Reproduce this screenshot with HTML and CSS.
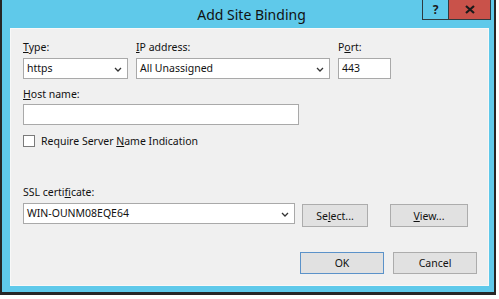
FILE: index.html
```html
<!DOCTYPE html>
<html lang="en">
<head>
  <meta charset="UTF-8" />
  <title>Add Site Binding</title>
  <link rel="stylesheet" href="styles.css">
</head>
<body>
  <div class="window">
    <div class="titlebar">
      <span class="title">Add Site Binding</span>
      <div class="caption-btns">
        <span class="cap help">?</span>
        <span class="cap close">
          <svg width="10" height="9" viewBox="0 0 10 9"><path d="M1 1 L9 8 M9 1 L1 8" stroke="#1a1a1a" stroke-width="2.2" fill="none"/></svg>
        </span>
      </div>
    </div>

    <div class="client">
      <div class="row-top">
        <div class="field">
          <label><u>T</u>ype:</label>
          <div class="select">https
            <svg class="chev" width="8" height="5" viewBox="0 0 8 5"><path d="M1 1 L4 4 L7 1" stroke="#333" stroke-width="1.3" fill="none"/></svg>
          </div>
        </div>
        <div class="field">
          <label><u>I</u>P address:</label>
          <div class="select">All Unassigned
            <svg class="chev" width="8" height="5" viewBox="0 0 8 5"><path d="M1 1 L4 4 L7 1" stroke="#333" stroke-width="1.3" fill="none"/></svg>
          </div>
        </div>
        <div class="field">
          <label>P<u>o</u>rt:</label>
          <div class="input">443</div>
        </div>
      </div>

      <div class="field host">
        <label><u>H</u>ost name:</label>
        <div class="input host-input"></div>
      </div>

      <label class="check"><span class="box"></span><span>Require Server <u>N</u>ame Indication</span></label>

      <div class="field ssl">
        <label>SSL certi<u>f</u>icate:</label>
        <div class="ssl-row">
          <div class="select ssl-select">WIN-OUNM08EQE64
            <svg class="chev" width="8" height="5" viewBox="0 0 8 5"><path d="M1 1 L4 4 L7 1" stroke="#333" stroke-width="1.3" fill="none"/></svg>
          </div>
          <button class="btn btn-select">Se<u>l</u>ect...</button>
          <button class="btn btn-view"><u>V</u>iew...</button>
        </div>
      </div>

      <div class="actions">
        <button class="btn ok">OK</button>
        <button class="btn cancel">Cancel</button>
      </div>
    </div>
  </div>
</body>
</html>
```

FILE: styles.css
```css
body {
  margin: 0;
  background: #ffffff;
  font-family: 'Noto Sans', sans-serif;
  font-size: 10.5px;
  color: #111;
}

.window {
  box-sizing: border-box;
  width: 496px;
  height: 295px;
  background: #5fc9ea;
  border: 2px solid #262626;
  border-top: 0;
  border-bottom-width: 3px;
  padding: 0 5px 6px 8px;
  position: relative;
  display: flex;
  flex-direction: column;
}

.titlebar {
  height: 28px;
  display: flex;
  align-items: center;
  justify-content: center;
}

.title {
  font-size: 14px;
  color: #111;
  margin-left: 4px;
  margin-top: 1px;
}

.caption-btns {
  position: absolute;
  top: 0;
  right: 3px;
  display: flex;
  border: 1px solid #2e3b40;
  border-top: 0;
}

.cap {
  height: 19px;
  display: flex;
  align-items: center;
  justify-content: center;
}

.help {
  width: 25px;
  background: #5fc9ea;
  font-weight: bold;
  font-size: 12px;
  color: #1a1a1a;
  border-right: 1px solid #2e3b40;
}

.close {
  width: 41px;
  background: #c9524a;
}

.client {
  flex: 1;
  background: #f0f0f0;
  border: 1px solid #f8f8f8;
  padding: 11px 11px 11px 12px;
  display: flex;
  flex-direction: column;
}

.field {
  display: flex;
  flex-direction: column;
}

.field label {
  height: 15px;
  line-height: 15px;
  margin-bottom: 3px;
}

.row-top {
  display: grid;
  grid-template-columns: 105px 194px 53px;
  column-gap: 8px;
}

.select,
.input {
  box-sizing: border-box;
  height: 21px;
  background: #fff;
  border: 1px solid #a9a9a9;
  padding: 0 3px;
  line-height: 19px;
  position: relative;
}

.chev {
  position: absolute;
  right: 5px;
  top: 8px;
}

.host {
  margin-top: 8px;
}

.host label {
  margin-bottom: 2px;
}

.host-input {
  width: 276px;
}

.check {
  margin-top: 9px;
  display: flex;
  align-items: center;
  height: 13px;
}

.box {
  box-sizing: border-box;
  width: 12px;
  height: 12px;
  background: #fff;
  border: 1px solid #7a7a7a;
  margin-right: 6px;
}

.ssl {
  margin-top: 38px;
}

.ssl-row {
  display: flex;
  align-items: flex-start;
}

.ssl-select {
  width: 272px;
}

.btn {
  box-sizing: border-box;
  font-family: inherit;
  font-size: 10.5px;
  color: #111;
  background: #e1e1e1;
  border: 1px solid #acacac;
  padding: 0;
  height: 23px;
}

.btn-select {
  width: 66px;
  margin-left: 7px;
  margin-top: 1px;
}

.btn-view {
  width: 78px;
  margin-left: 22px;
  margin-top: 1px;
}

.actions {
  margin-top: auto;
  display: flex;
  justify-content: flex-end;
  gap: 9px;
}

.actions .btn {
  height: 22px;
  width: 84px;
}

.ok {
  border-color: #5b92c9;
}
```
